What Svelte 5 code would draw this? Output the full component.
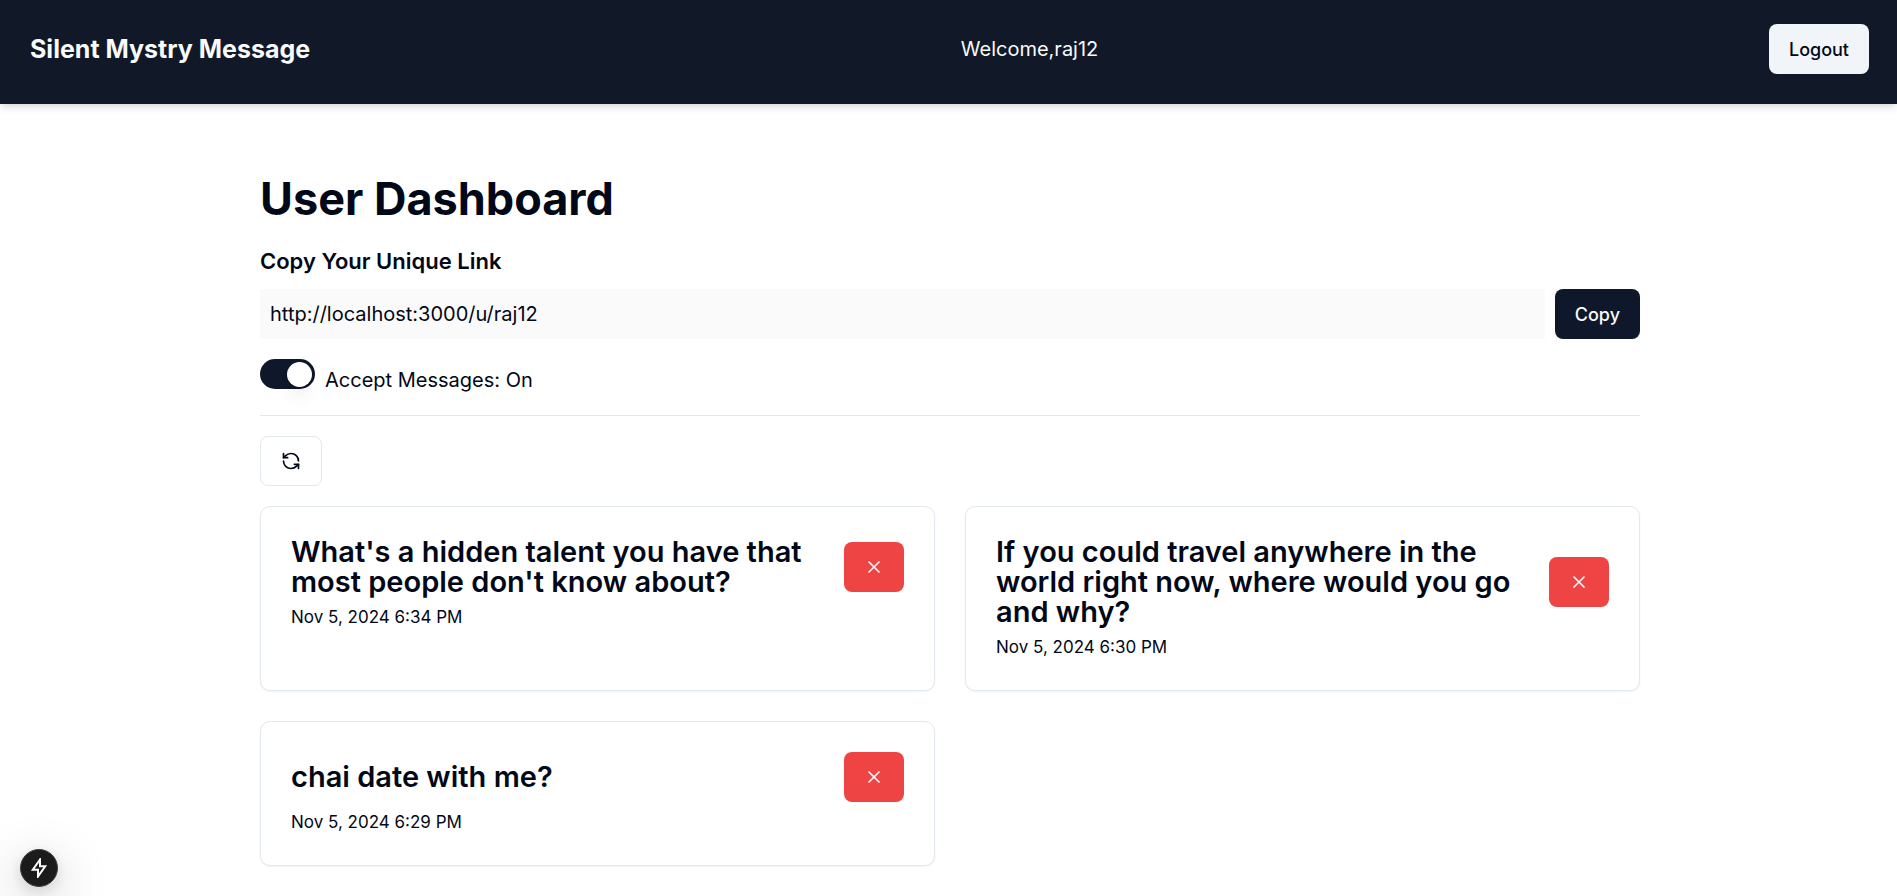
<script>
  let accepting = $state(true);
  let messages = $state([
    { id: 1, content: "What's a hidden talent you have that most people don't know about?", date: 'Nov 5, 2024 6:34 PM' },
    { id: 2, content: 'If you could travel anywhere in the world right now, where would you go and why?', date: 'Nov 5, 2024 6:30 PM' },
    { id: 3, content: 'chai date with me?', date: 'Nov 5, 2024 6:29 PM' }
  ]);
  const profileUrl = 'http://localhost:3000/u/raj12';

  function remove(id) {
    messages = messages.filter((m) => m.id !== id);
  }
</script>

<nav>
  <a class="brand" href="/">Silent Mystry Message</a>
  <span class="welcome">Welcome,raj12</span>
  <button class="btn light" type="button">Logout</button>
</nav>

<main>
  <h1>User Dashboard</h1>

  <h2><label for="link">Copy Your Unique Link</label></h2>
  <div class="link-row">
    <input id="link" class="link" type="text" readonly value={profileUrl} />
    <button class="btn dark" type="button">Copy</button>
  </div>

  <div class="switch-row">
    <input id="accept" class="switch" type="checkbox" role="switch" bind:checked={accepting} />
    <label for="accept">Accept Messages: {accepting ? 'On' : 'Off'}</label>
  </div>

  <hr />

  <button class="btn outline" type="button" aria-label="Refresh">
    <svg viewBox="0 0 24 24" aria-hidden="true">
      <path d="M21 12a9 9 0 0 0-9-9 9.75 9.75 0 0 0-6.74 2.74L3 8" />
      <path d="M3 3v5h5" />
      <path d="M3 12a9 9 0 0 0 9 9 9.75 9.75 0 0 0 6.74-2.74L21 16" />
      <path d="M16 16h5v5" />
    </svg>
  </button>

  <div class="grid">
    {#each messages as message (message.id)}
      <article class="card">
        <div class="card-head">
          <h3>{message.content}</h3>
          <button class="btn danger" type="button" aria-label="Delete message" onclick={() => remove(message.id)}>
            <svg viewBox="0 0 24 24" aria-hidden="true">
              <path d="M18 6 6 18" />
              <path d="m6 6 12 12" />
            </svg>
          </button>
        </div>
        <p class="date">{message.date}</p>
      </article>
    {/each}
  </div>
</main>

<button class="indicator" type="button" aria-label="Development tools">
  <svg viewBox="0 0 20 20" aria-hidden="true">
    <path d="M11 1.5 3.8 11.8H9V18.5L16.2 8.2H11Z" />
  </svg>
</button>

<style>
  :global(body) {
    margin: 0;
    background: #fff;
    color: #020817;
    font-family: Inter, sans-serif;
    font-size: 20px;
    line-height: 30px;
  }

  nav {
    display: flex;
    align-items: center;
    justify-content: space-between;
    padding: 24px 28px 30px 30px;
    background: #111827;
    color: #f8fafc;
    box-shadow: 0 5px 8px -1px rgb(0 0 0 / 0.1), 0 2px 5px -2px rgb(0 0 0 / 0.1);
  }

  .brand {
    color: inherit;
    font-size: 25px;
    font-weight: 700;
    text-decoration: none;
  }

  .welcome {
    margin-right: 20px;
  }

  main {
    box-sizing: border-box;
    max-width: 1443px;
    margin: 40px auto 0;
    padding: 30px 30px 30px 33px;
  }

  h1,
  h2,
  h3,
  p {
    margin: 0;
  }

  h1 {
    margin-bottom: 20px;
    font-size: 45px;
    font-weight: 700;
    line-height: 50px;
  }

  h2 {
    margin-bottom: 10px;
    font-size: 22px;
    font-weight: 600;
    line-height: 35px;
  }

  .btn {
    display: inline-flex;
    flex: none;
    align-items: center;
    justify-content: center;
    box-sizing: border-box;
    height: 50px;
    padding: 0 20px;
    border: 0;
    border-radius: 8px;
    font: 500 18px/25px Inter, sans-serif;
    cursor: pointer;
  }

  .btn svg {
    width: 20px;
    height: 20px;
    fill: none;
    stroke: currentColor;
    stroke-width: 2;
    stroke-linecap: round;
    stroke-linejoin: round;
  }

  .light {
    background: #f1f5f9;
    color: #020817;
  }

  .dark {
    background: #0f172a;
    color: #f8fafc;
  }

  .outline {
    border: 1px solid #e2e8f0;
    background: #fff;
    color: #020817;
  }

  .danger {
    background: #ef4444;
    color: #f8fafc;
  }

  .link-row {
    display: flex;
    gap: 10px;
    margin-bottom: 20px;
  }

  .link {
    flex: 1;
    box-sizing: border-box;
    min-width: 0;
    height: 50px;
    padding: 0 10px;
    border: 0;
    background: #fafafa;
    color: inherit;
    font: inherit;
  }

  .switch-row {
    display: flex;
    align-items: flex-start;
    gap: 10px;
  }

  .switch-row label {
    padding-top: 6px;
  }

  .switch {
    flex: none;
    display: flex;
    box-sizing: border-box;
    width: 55px;
    height: 30px;
    margin: 0;
    padding: 3px 3px 2px;
    border-radius: 15px;
    background: #e2e8f0;
    appearance: none;
    cursor: pointer;
  }

  .switch::before {
    content: '';
    width: 25px;
    height: 25px;
    border-radius: 50%;
    background: #fff;
    box-shadow: 0 12px 19px -4px rgb(0 0 0 / 0.1), 0 5px 8px -5px rgb(0 0 0 / 0.1);
  }

  .switch:checked {
    justify-content: flex-end;
    background: #0f172a;
  }

  hr {
    height: 1px;
    margin: 20px 0;
    border: 0;
    background: #e2e8f0;
  }

  .grid {
    display: grid;
    grid-template-columns: repeat(2, minmax(0, 1fr));
    gap: 30px;
    margin-top: 20px;
  }

  .card {
    padding: 30px;
    border: 1px solid #e2e8f0;
    border-radius: 10px;
    background: #fff;
    box-shadow: 0 1px 2px rgb(0 0 0 / 0.06);
  }

  .card-head {
    display: flex;
    align-items: center;
    justify-content: space-between;
    margin-bottom: 8px;
  }

  h3 {
    font-size: 29px;
    font-weight: 600;
    line-height: 30px;
  }

  .date {
    font-size: 17px;
    line-height: 25px;
  }

  .indicator {
    position: fixed;
    bottom: 9px;
    left: 20px;
    display: grid;
    place-items: center;
    width: 38px;
    height: 38px;
    padding: 0;
    border: 1px solid #404040;
    border-radius: 50%;
    background: #1b1b1b;
    box-shadow: 0 14px 50px rgb(0 0 0 / 0.25), 0 4px 14px rgb(0 0 0 / 0.12);
  }

  .indicator svg {
    width: 20px;
    height: 20px;
    fill: none;
    stroke: #fff;
    stroke-width: 2;
  }
</style>
